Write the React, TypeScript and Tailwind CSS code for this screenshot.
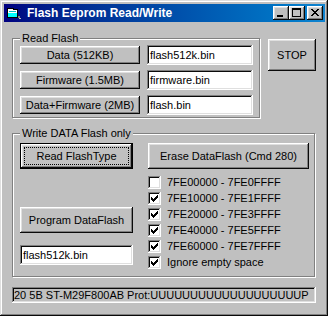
import React from "react";

const raised =
  "shadow-[inset_-1px_-1px_#0a0a0a,inset_1px_1px_#ffffff,inset_-2px_-2px_#808080,inset_2px_2px_#dfdfdf]";
const sunken =
  "shadow-[inset_-1px_-1px_#ffffff,inset_1px_1px_#808080,inset_-2px_-2px_#dfdfdf,inset_2px_2px_#0a0a0a]";

function Btn({ className = "", children }: { className?: string; children?: React.ReactNode }) {
  return (
    <div className={`${raised} bg-[#c0c0c0] flex items-center justify-center whitespace-nowrap ${className}`}>
      {children}
    </div>
  );
}

function DefaultBtn({ className = "", children }: { className?: string; children?: React.ReactNode }) {
  return (
    <div className={`border border-black flex ${className}`}>
      <div className={`${raised} bg-[#c0c0c0] flex-1 flex p-[3px]`}>
        <div className="flex-1 border border-dotted border-black flex items-center justify-center whitespace-nowrap">
          {children}
        </div>
      </div>
    </div>
  );
}

function Field({ className = "", children }: { className?: string; children?: React.ReactNode }) {
  return (
    <div className={`${sunken} bg-white pl-[3px] flex items-center whitespace-nowrap ${className}`}>{children}</div>
  );
}

function Group({
  label,
  className = "",
  children,
}: {
  label: string;
  className?: string;
  children?: React.ReactNode;
}) {
  return (
    <div
      className={`flex flex-col border border-[#808080] shadow-[1px_1px_0_#ffffff,inset_1px_1px_0_#ffffff] ${className}`}
    >
      <div className="-mt-[7px] ml-[7px] self-start bg-[#c0c0c0] px-[2px] h-[13px] whitespace-nowrap">{label}</div>
      {children}
    </div>
  );
}

function Check({ checked }: { checked: boolean }) {
  return (
    <div className={`${sunken} bg-white w-[13px] h-[13px] shrink-0 relative`}>
      {checked && (
        <svg width="13" height="13" viewBox="0 0 13 13" className="block" shapeRendering="crispEdges">
          <g fill="#000">
            <rect x="9" y="3" width="1" height="1" />
            <rect x="8" y="4" width="2" height="1" />
            <rect x="3" y="5" width="1" height="1" />
            <rect x="7" y="5" width="3" height="1" />
            <rect x="3" y="6" width="2" height="1" />
            <rect x="6" y="6" width="3" height="1" />
            <rect x="3" y="7" width="5" height="1" />
            <rect x="4" y="8" width="3" height="1" />
            <rect x="5" y="9" width="1" height="1" />
          </g>
        </svg>
      )}
    </div>
  );
}

function TitleBtn({ children, className = "" }: { children: React.ReactNode; className?: string }) {
  return <div className={`${raised} bg-[#c0c0c0] w-[16px] h-[14px] ${className}`}>{children}</div>;
}

function TitleBar() {
  return (
    <div className="h-[18px] flex items-center bg-linear-to-r from-[#000080] to-[#1084d0] shrink-0">
      <svg width="16" height="16" viewBox="0 0 16 16" className="ml-[2px] shrink-0" shapeRendering="crispEdges">
        <path d="M1 3 H8 V4 H12 V13 H1 Z" fill="#000" />
        <path d="M2 4 H7 V5 H11 V8 H2 Z" fill="#ffffff" />
        <path d="M2 8 H11 V12 H2 Z" fill="#00ffff" />
        <path d="M3 6 H10 V7 H3 Z" fill="#00c0c0" />
        <path d="M12 11 H14 V13 H12 Z" fill="#808080" />
        <path d="M13 13 H15 V14 H13 Z" fill="#c0c0c0" />
      </svg>
      <span className="ml-[5px] text-white font-bold text-[12px] leading-[14px] whitespace-nowrap">
        Flash Eeprom Read/Write
      </span>
      <div className="ml-auto flex items-center mr-[2px]">
        <TitleBtn>
          <svg width="16" height="14" viewBox="0 0 16 14" shapeRendering="crispEdges">
            <rect x="4" y="9" width="6" height="2" fill="#000" />
          </svg>
        </TitleBtn>
        <TitleBtn>
          <svg width="16" height="14" viewBox="0 0 16 14" shapeRendering="crispEdges">
            <path d="M3 2 H12 V11 H3 Z M4 4 V10 H11 V4 Z" fill="#000" fillRule="evenodd" />
          </svg>
        </TitleBtn>
        <TitleBtn className="ml-[2px]">
          <svg width="16" height="14" viewBox="0 0 16 14" shapeRendering="crispEdges">
            <g fill="#000">
              <rect x="4" y="3" width="2" height="1" />
              <rect x="10" y="3" width="2" height="1" />
              <rect x="5" y="4" width="2" height="1" />
              <rect x="9" y="4" width="2" height="1" />
              <rect x="6" y="5" width="4" height="1" />
              <rect x="7" y="6" width="2" height="1" />
              <rect x="6" y="7" width="4" height="1" />
              <rect x="5" y="8" width="2" height="1" />
              <rect x="9" y="8" width="2" height="1" />
              <rect x="4" y="9" width="2" height="1" />
              <rect x="10" y="9" width="2" height="1" />
            </g>
          </svg>
        </TitleBtn>
      </div>
    </div>
  );
}

export default function App() {
  const rows = [
    ["Data (512KB)", "flash512k.bin"],
    ["Firmware (1.5MB)", "firmware.bin"],
    ["Data+Firmware (2MB)", "flash.bin"],
  ];
  const checks: [string, boolean][] = [
    ["7FE00000 - 7FE0FFFF", false],
    ["7FE10000 - 7FE1FFFF", true],
    ["7FE20000 - 7FE3FFFF", true],
    ["7FE40000 - 7FE5FFFF", true],
    ["7FE60000 - 7FE7FFFF", true],
    ["Ignore empty space", true],
  ];
  return (
    <div className="w-[328px] h-[316px] bg-[#c0c0c0] pt-[4px] pl-[4px] pr-[3px] flex flex-col font-['Liberation_Sans',Arial,sans-serif] text-[11px] leading-[13px] text-black shadow-[inset_-1px_-1px_#0a0a0a,inset_1px_1px_#dfdfdf,inset_-2px_-2px_#808080,inset_2px_2px_#ffffff]">
      <TitleBar />
      <div className="flex flex-col pl-[8px]">
        <div className="mt-[16px] flex items-start">
          <Group label="Read Flash" className="w-[248px] h-[80px]">
            <div className="flex flex-col gap-[5px] pl-[7px]">
              {rows.map(([b, f]) => (
                <div key={b} className="flex items-center h-[20px]">
                  <Btn className="w-[120px] h-[18px]">{b}</Btn>
                  <Field className="ml-[7px] w-[106px] h-[20px]">{f}</Field>
                </div>
              ))}
            </div>
          </Group>
          <Btn className="ml-[8px] mt-[1px] w-[48px] h-[32px]">STOP</Btn>
        </div>
        <Group label="Write DATA Flash only" className="mt-[15px] w-[303px] h-[144px]">
          <div className="mt-[3px] flex pl-[7px]">
            <div className="flex flex-col w-[113px]">
              <DefaultBtn className="h-[26px]">Read FlashType</DefaultBtn>
              <Btn className="mt-[38px] h-[26px]">Program DataFlash</Btn>
              <Field className="mt-[12px] h-[20px]">flash512k.bin</Field>
            </div>
            <div className="ml-[15px] flex flex-col w-[161px]">
              <Btn className="h-[26px]">Erase DataFlash (Cmd 280)</Btn>
              <div className="mt-[5px] flex flex-col">
                {checks.map(([t, c]) => (
                  <div key={t} className="h-[16px] flex items-center">
                    <Check checked={c} />
                    <span className="ml-[6px] whitespace-nowrap">{t}</span>
                  </div>
                ))}
              </div>
            </div>
          </div>
        </Group>
        <div className={`${sunken} mt-[10px] w-[304px] h-[16px] bg-[#c0c0c0] pl-[2px] flex items-center whitespace-nowrap`}>
          20 5B ST-M29F800AB Prot:UUUUUUUUUUUUUUUUUUUP
        </div>
      </div>
    </div>
  );
}
